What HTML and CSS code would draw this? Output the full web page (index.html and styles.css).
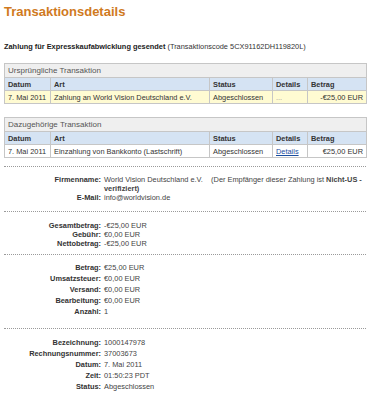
FILE: index.html
```html
<!DOCTYPE html>
<html lang="de">
<head>
<meta charset="utf-8">
<title>Transaktionsdetails</title>
<link rel="stylesheet" href="styles.css">
</head>
<body>
<div class="page">
  <h1 class="title">Transaktionsdetails</h1>
  <p class="subtitle"><b>Zahlung für Expresskaufabwicklung gesendet</b> (Transaktionscode 5CX91162DH119820L)</p>

  <table class="txn">
    <colgroup><col class="c1"><col class="c2"><col class="c3"><col class="c4"><col class="c5"></colgroup>
    <tr class="cap"><td colspan="5">Ursprüngliche Transaktion</td></tr>
    <tr class="head"><th>Datum</th><th>Art</th><th>Status</th><th>Details</th><th>Betrag</th></tr>
    <tr class="row yellow"><td>7. Mai 2011</td><td>Zahlung an World Vision Deutschland e.V.</td><td>Abgeschlossen</td><td class="muted">...</td><td class="num">-€25,00 EUR</td></tr>
  </table>

  <table class="txn second">
    <colgroup><col class="c1"><col class="c2"><col class="c3"><col class="c4"><col class="c5"></colgroup>
    <tr class="cap"><td colspan="5">Dazugehörige Transaktion</td></tr>
    <tr class="head"><th>Datum</th><th>Art</th><th>Status</th><th>Details</th><th>Betrag</th></tr>
    <tr class="row"><td>7. Mai 2011</td><td>Einzahlung von Bankkonto (Lastschrift)</td><td>Abgeschlossen</td><td><a href="#" class="link">Details</a></td><td class="num">€25,00 EUR</td></tr>
  </table>

  <section class="sec s1">
    <dl class="info tight">
      <dt>Firmenname:</dt><dd>World Vision Deutschland e.V. &nbsp;&nbsp; (Der Empfänger dieser Zahlung ist <b>Nicht-US - verifiziert)</b></dd>
      <dt>E-Mail:</dt><dd>info@worldvision.de</dd>
    </dl>
  </section>

  <section class="sec s2">
    <dl class="info tight">
      <dt>Gesamtbetrag:</dt><dd>-€25,00 EUR</dd>
      <dt>Gebühr:</dt><dd>€0,00 EUR</dd>
      <dt>Nettobetrag:</dt><dd>-€25,00 EUR</dd>
    </dl>
  </section>

  <section class="sec s3">
    <dl class="info">
      <dt>Betrag:</dt><dd>€25,00 EUR</dd>
      <dt>Umsatzsteuer:</dt><dd>€0,00 EUR</dd>
      <dt>Versand:</dt><dd>€0,00 EUR</dd>
      <dt>Bearbeitung:</dt><dd>€0,00 EUR</dd>
      <dt>Anzahl:</dt><dd>1</dd>
    </dl>
  </section>

  <section class="sec s4">
    <dl class="info">
      <dt>Bezeichnung:</dt><dd>1000147978</dd>
      <dt>Rechnungsnummer:</dt><dd>37003673</dd>
      <dt>Datum:</dt><dd>7. Mai 2011</dd>
      <dt>Zeit:</dt><dd>01:50:23 PDT</dd>
      <dt>Status:</dt><dd>Abgeschlossen</dd>
    </dl>
  </section>
</div>
</body>
</html>
```

FILE: styles.css
```css
html, body {
  margin: 0;
  padding: 0;
  background: #ffffff;
}

.page {
  padding: 2px 2px 0 4px;
  font-family: "Liberation Sans", Arial, sans-serif;
  font-size: 7.4px;
  color: #333333;
}

.title {
  margin: 0;
  font-size: 13px;
  line-height: 20px;
  font-weight: bold;
  color: #d07a1e;
}

.subtitle {
  margin: 20px 0 0 0;
  line-height: 10px;
  color: #333333;
}

.subtitle b {
  color: #222222;
}

.txn {
  width: 362px;
  margin-top: 11px;
  border-collapse: collapse;
  border: 1px solid #c6c6c6;
  table-layout: fixed;
}

.txn.second {
  margin-top: 13px;
}

.c1 { width: 46px; }
.c2 { width: 159px; }
.c3 { width: 63px; }
.c4 { width: 35px; }
.c5 { width: 59px; }

.txn td, .txn th {
  padding: 0 3px;
  text-align: left;
  white-space: nowrap;
  overflow: hidden;
}

.cap td {
  height: 13px;
  background: #efefef;
  font-size: 8px;
  color: #555555;
  border-bottom: 1px solid #c6c6c6;
}

.head th {
  height: 12px;
  background: #d5e3f3;
  font-weight: bold;
  color: #333333;
  border-left: 1px solid #c6c6c6;
}

.row td {
  height: 12px;
  border-top: 1px solid #c6c6c6;
  border-left: 1px solid #c6c6c6;
  background: #ffffff;
}

.row.yellow td {
  background: #fffbd2;
}

.txn .num {
  text-align: right;
}

.muted {
  color: #999999;
}

.link {
  color: #1a4d9e;
  text-decoration: underline;
}

.sec {
  width: 362px;
  border-top: 1px dotted #9a9a9a;
}

.s1 { margin-top: 8px; padding: 8px 0 9px 0; }
.s2 { padding: 9px 0 6px 0; }
.s3 { padding: 7px 0 11px 0; }
.s4 { padding: 8px 0 0 0; }

.info {
  display: grid;
  grid-template-columns: 97px 1fr;
  column-gap: 3px;
  margin: 0;
  line-height: 11px;
}

.info.tight {
  line-height: 9px;
}

.info dt {
  font-weight: bold;
  text-align: right;
  color: #333333;
}

.info dd {
  margin: 0;
  color: #444444;
}
```
